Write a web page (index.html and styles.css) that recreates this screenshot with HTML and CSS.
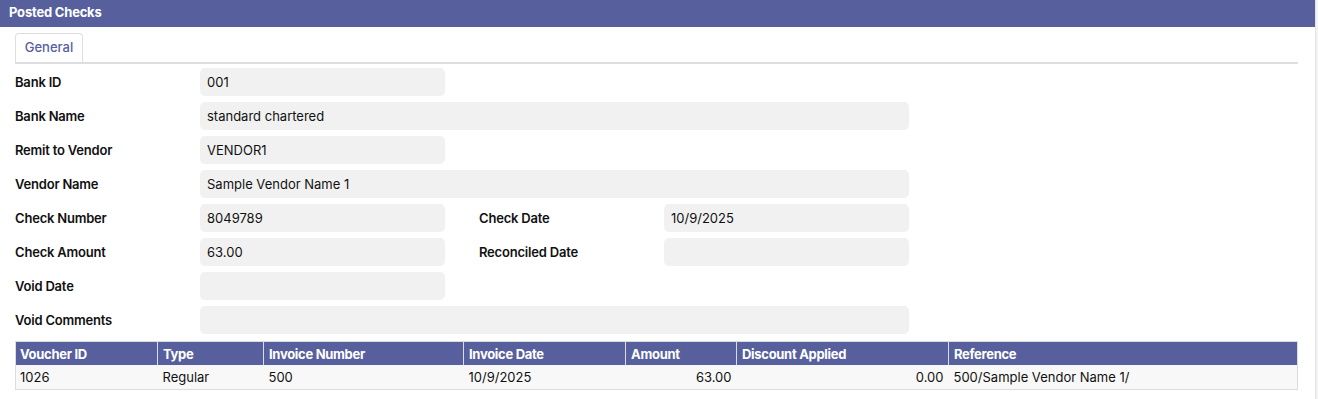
FILE: index.html
```html
<!DOCTYPE html>
<html lang="en">
<head>
    <meta charset="UTF-8">
    <meta name="viewport" content="width=device-width, initial-scale=1.0">
    <title>Posted Checks</title>
    <link rel="stylesheet" href="styles.css">
</head>
<body>

<div class="page">
    <div class="title-bar">Posted Checks</div>

    <div class="content">
        <div class="tabs">
            <div class="tab active">General</div>
        </div>

        <div class="form-grid">
            <label class="label">Bank ID</label>
            <div class="field">001</div>
            <div class="spacer-row"></div>

            <label class="label">Bank Name</label>
            <div class="field wide">standard chartered</div>

            <label class="label">Remit to Vendor</label>
            <div class="field">VENDOR1</div>
            <div class="spacer-row"></div>

            <label class="label">Vendor Name</label>
            <div class="field wide">Sample Vendor Name 1</div>

            <label class="label">Check Number</label>
            <div class="field">8049789</div>
            <span></span>
            <label class="label">Check Date</label>
            <div class="field">10/9/2025</div>

            <label class="label">Check Amount</label>
            <div class="field">63.00</div>
            <span></span>
            <label class="label">Reconciled Date</label>
            <div class="field"></div>

            <label class="label">Void Date</label>
            <div class="field"></div>
            <div class="spacer-row"></div>

            <label class="label">Void Comments</label>
            <div class="field wide"></div>
        </div>

        <table class="grid">
            <thead>
                <tr>
                    <th class="c-voucher">Voucher ID</th>
                    <th class="c-type">Type</th>
                    <th class="c-invoice">Invoice Number</th>
                    <th class="c-date">Invoice Date</th>
                    <th class="c-amount">Amount</th>
                    <th class="c-discount">Discount Applied</th>
                    <th>Reference</th>
                </tr>
            </thead>
            <tbody>
                <tr>
                    <td>1026</td>
                    <td>Regular</td>
                    <td>500</td>
                    <td>10/9/2025</td>
                    <td class="num">63.00</td>
                    <td class="num">0.00</td>
                    <td>500/Sample Vendor Name 1/</td>
                </tr>
            </tbody>
        </table>
    </div>
</div>

</body>
</html>
```

FILE: styles.css
```css
body {
    margin: 0;
    background-color: #f4f4f4;
    font-family: Inter, "Noto Sans", sans-serif;
    font-size: 13px;
    color: #111;
}

.page {
    width: 1315px;
    height: 399px;
    background-color: #fff;
    border-right: 1px solid #e2e2e2;
}

.title-bar {
    height: 27px;
    line-height: 25px;
    padding-left: 9px;
    background-color: #57609d;
    color: #fff;
    font-weight: 700;
    letter-spacing: -0.2px;
}

.content {
    padding: 6px 17px 0 15px;
}

.tabs {
    display: flex;
    border-bottom: 2px solid #dedede;
}

.tab {
    width: 66px;
    height: 28px;
    line-height: 27px;
    text-align: center;
    border: 1px solid #dedede;
    border-bottom: none;
    border-radius: 4px 4px 0 0;
    color: #57609d;
    font-weight: 500;
}

.form-grid {
    display: grid;
    grid-template-columns: 185px 245px 34px 185px 245px;
    grid-auto-rows: 28px;
    row-gap: 6px;
    margin-top: 4px;
    align-items: center;
}

.label {
    font-weight: 600;
    letter-spacing: -0.2px;
}

.field {
    height: 28px;
    line-height: 28px;
    padding-left: 7px;
    background-color: #f1f1f1;
    border-radius: 5px;
}

.field.wide {
    grid-column: 2 / 6;
}

.spacer-row {
    grid-column: 3 / 6;
}

.grid {
    width: 100%;
    margin-top: 7px;
    border-collapse: collapse;
    border: 1px solid #dcdcdc;
}

.grid th {
    height: 23px;
    padding: 0 5px;
    text-align: left;
    background-color: #57609d;
    color: #fff;
    font-weight: 700;
    letter-spacing: -0.3px;
    border-left: 1px solid #d8dbeb;
}

.grid th:first-child {
    border-left: none;
    padding-left: 4px;
}

.grid td {
    height: 24px;
    padding: 0 5px;
    background-color: #f8f8f8;
}

.grid td:first-child {
    padding-left: 4px;
}

.grid td.num {
    text-align: right;
}

.c-voucher { width: 132px; }
.c-type { width: 95px; }
.c-invoice { width: 189px; }
.c-date { width: 151px; }
.c-amount { width: 100px; }
.c-discount { width: 201px; }
```
